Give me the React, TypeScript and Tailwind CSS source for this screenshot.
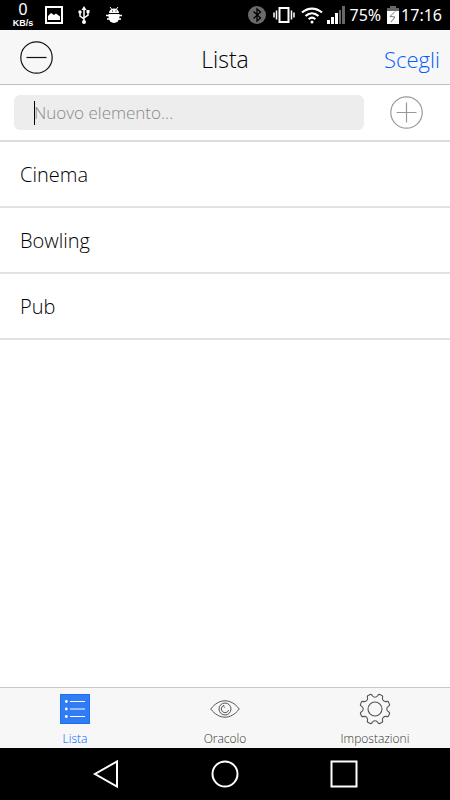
import React, { useState } from 'react';

type TabId = 'lista' | 'oracolo' | 'impostazioni';

interface Tab {
  id: TabId;
  label: string;
  icon: React.ReactNode;
}

// Outline of the settings gear: eight rounded teeth with hollow valleys
const gearPath = () => {
  const point = (deg: number, r: number) => {
    const rad = (deg * Math.PI) / 180;
    return `${(16 + r * Math.cos(rad)).toFixed(2)} ${(16 + r * Math.sin(rad)).toFixed(2)}`;
  };
  let d = `M${point(12.5, 14.2)}`;
  for (let i = 0; i < 8; i++) {
    const a = 22.5 + i * 45;
    d += ` Q${point(a - 8, 15.7)} ${point(a, 15.2)}`;
    d += ` Q${point(a + 8, 15.7)} ${point(a + 10, 14.2)}`;
    d += ` C${point(a + 13, 11.2)} ${point(a + 32, 11.2)} ${point(a + 35, 14.2)}`;
  }
  return `${d} Z`;
};

function ListIcon() {
  return (
    <svg width="30" height="30" viewBox="0 0 30 30" aria-hidden="true">
      <rect width="30" height="30" fill="#2f7cf6" />
      <rect x="0.5" y="0.5" width="29" height="29" fill="none" stroke="#1f6df0" />
      <g fill="#fff">
        <circle cx="6.3" cy="7.5" r="1.4" />
        <circle cx="6.3" cy="15" r="1.4" />
        <circle cx="6.3" cy="22.5" r="1.4" />
      </g>
      <path d="M10 7.5h15M10 15h15M10 22.5h15" stroke="#fff" strokeWidth="1.2" />
    </svg>
  );
}

function EyeIcon() {
  return (
    <svg width="30" height="30" viewBox="0 0 30 30" fill="none" stroke="#555" aria-hidden="true">
      <path d="M0.7 15C5 9.5 10 6.8 15 6.8S25 9.5 29.3 15C25 20.5 20 23.2 15 23.2S5 20.5 0.7 15Z" />
      <circle cx="15" cy="15" r="6" />
      <path d="M14 11.4A3.7 3.7 0 1 0 18.6 16" />
      <path d="M14 11.4c-.6 1 0 2 1.2 2" strokeWidth="0.8" />
    </svg>
  );
}

function GearIcon() {
  return (
    <svg width="32" height="32" viewBox="0 0 32 32" fill="none" stroke="#555" strokeWidth="1.1" aria-hidden="true">
      <path d={gearPath()} />
      <circle cx="16" cy="16" r="7" />
    </svg>
  );
}

const tabs: Tab[] = [
  { id: 'lista', label: 'Lista', icon: <ListIcon /> },
  { id: 'oracolo', label: 'Oracolo', icon: <EyeIcon /> },
  { id: 'impostazioni', label: 'Impostazioni', icon: <GearIcon /> },
];

function StatusBar() {
  return (
    <div className="flex h-[30px] items-center justify-between bg-black pr-2 pl-3 font-normal text-white">
      <div className="flex items-center">
        <div className="w-[22px] text-center font-['Liberation_Sans',sans-serif] font-bold">
          <div className="text-[16px] leading-4 font-normal">0</div>
          <div className="text-[9px] leading-[10px]">KB/s</div>
        </div>
        <svg className="ml-[11px]" width="18" height="18" viewBox="0 0 18 18" aria-hidden="true">
          <rect x="1" y="1" width="16" height="16" fill="none" stroke="#fff" strokeWidth="2" />
          <path d="M3 14V10l3-3 3 2 2-1.5 4 3V14Z" fill="#fff" />
        </svg>
        <svg className="ml-[15px]" width="12" height="18" viewBox="0 0 12 18" aria-hidden="true">
          <path d="M6 3v13M2 6v4l4 3M10 5v4l-4 3" fill="none" stroke="#fff" strokeWidth="1.5" />
          <path d="M6 0l2.5 4h-5Z" fill="#fff" />
          <circle cx="2" cy="6" r="1.7" fill="#fff" />
          <rect x="8.5" y="4" width="3" height="3" fill="#fff" />
          <circle cx="6" cy="16" r="2" fill="#fff" />
        </svg>
        <svg className="ml-4" width="16" height="18" viewBox="0 0 16 18" aria-hidden="true">
          <path d="M3 7a5 4.5 0 0 1 10 0Z" fill="#fff" />
          <path d="M4 1l2 2.5M12 1l-2 2.5" stroke="#fff" />
          <path d="M2.5 8h11v3a5.5 6 0 0 1-11 0Z" fill="#fff" />
          <path d="M0 9.5h16M1 13h14" stroke="#fff" strokeWidth="1.5" />
          <path d="M6 5h1M9.5 5h1" stroke="#000" />
        </svg>
      </div>

      <div className="flex items-center font-['Noto_Sans',sans-serif]">
        <svg width="18" height="18" viewBox="0 0 18 18" aria-hidden="true">
          <circle cx="9" cy="9" r="9" fill="#6b6b6b" />
          <path d="M5.5 5.5l7 6.5L9 15V3l3.5 3-7 6.5" fill="none" stroke="#000" strokeWidth="1.3" />
        </svg>
        <svg className="ml-[7px]" width="22" height="18" viewBox="0 0 22 18" fill="none" stroke="#fff" aria-hidden="true">
          <rect x="6.5" y="2" width="9" height="14" strokeWidth="2" />
          <path d="M3.5 4.5v9M18.5 4.5v9" strokeWidth="1.5" />
          <path d="M1 6.5v5M21 6.5v5" strokeWidth="1.5" />
        </svg>
        <svg className="ml-[6px]" width="22" height="18" viewBox="0 0 22 18" fill="none" stroke="#fff" strokeWidth="2.2" aria-hidden="true">
          <path d="M1 6.5c6-5.3 14-5.3 20 0M4.5 10c4-3.6 9-3.6 13 0M7.7 13.2c2-1.8 4.6-1.8 6.6 0" />
          <circle cx="11" cy="16" r="1.5" fill="#fff" stroke="none" />
        </svg>
        <svg className="ml-1" width="18" height="18" viewBox="0 0 18 18" aria-hidden="true">
          <path d="M0 14h3v4H0zM4 11h3v7H4zM8 7h3v11H8z" fill="#fff" />
          <path d="M12 4h2v14h-2zM15 0h3v18h-3z" fill="#666" />
        </svg>
        <span className="ml-1 text-[16px] leading-5">75%</span>
        <svg className="ml-[6px]" width="12" height="18" viewBox="0 0 12 18" aria-hidden="true">
          <path d="M3 0h6v2h3v3H0V2h3Z" fill="#666" />
          <path d="M0 5h12v13H0Z" fill="#fff" />
          <path d="M8 5.5L3 10.5l5 .5-4 5" fill="none" stroke="#777" />
        </svg>
        <span className="ml-[2px] text-[16px] leading-5">17:16</span>
      </div>
    </div>
  );
}

function SystemNav() {
  return (
    <div className="flex h-[52px] items-center justify-around bg-black px-[46px]">
      <button type="button" aria-label="Indietro">
        <svg width="28" height="30" viewBox="0 0 28 30" fill="none" stroke="#fff" strokeWidth="2" aria-hidden="true">
          <path d="M25 2.5v25L3 15Z" />
        </svg>
      </button>
      <button type="button" aria-label="Home">
        <svg width="28" height="28" viewBox="0 0 28 28" fill="none" stroke="#fff" strokeWidth="2" aria-hidden="true">
          <circle cx="14" cy="14" r="12.5" />
        </svg>
      </button>
      <button type="button" aria-label="Recenti">
        <svg width="28" height="28" viewBox="0 0 28 28" fill="none" stroke="#fff" strokeWidth="2" aria-hidden="true">
          <rect x="1.5" y="1.5" width="25" height="25" />
        </svg>
      </button>
    </div>
  );
}

export default function App() {
  const [items, setItems] = useState<string[]>(['Cinema', 'Bowling', 'Pub']);
  const [text, setText] = useState<string>('');
  const [activeTab, setActiveTab] = useState<TabId>('lista');

  const addItem = (e: React.FormEvent) => {
    e.preventDefault();
    if (text.trim() === '') return;
    setItems((prev) => [...prev, text.trim()]);
    setText('');
  };

  return (
    <div className="flex min-h-screen flex-col bg-white font-['Open_Sans','Noto_Sans',sans-serif] font-light text-black">
      <StatusBar />

      <header className="grid h-[55px] grid-cols-3 items-center border-b border-[#c0c0c0] bg-[#f7f7f7]">
        <button
          type="button"
          aria-label="Rimuovi"
          className="ml-5 justify-self-start"
          onClick={() => setItems((prev) => prev.slice(0, -1))}
        >
          <svg width="33" height="33" viewBox="0 0 33 33" fill="none" stroke="#111" strokeWidth="1.2" aria-hidden="true">
            <circle cx="16.5" cy="16.5" r="15.7" />
            <path d="M6.5 16.5h20" />
          </svg>
        </button>
        <h1 className="pt-1 text-center text-[23px] leading-7">Lista</h1>
        <button type="button" className="mr-[10px] justify-self-end pt-1 text-[22px] leading-7 text-[#0060ff]">
          Scegli
        </button>
      </header>

      <form onSubmit={addItem} className="flex h-[57px] items-center border-b-2 border-[#dcdcdc] pr-[27px] pl-[14px]">
        <div className="relative flex-1">
          <input
            type="text"
            aria-label="Nuovo elemento"
            placeholder="Nuovo elemento..."
            value={text}
            onChange={(e) => setText(e.target.value)}
            className="h-[35px] w-full rounded-md bg-[#ededed] px-5 text-[17px] placeholder:text-[#888] focus:outline-none"
          />
          {/* Text cursor */}
          {text === '' && <span className="pointer-events-none absolute top-[6px] left-5 h-6 w-px bg-black" />}
        </div>
        <button type="submit" aria-label="Aggiungi" className="ml-[26px]">
          <svg width="33" height="33" viewBox="0 0 33 33" fill="none" stroke="#999" strokeWidth="1.2" aria-hidden="true">
            <circle cx="16.5" cy="16.5" r="15.7" />
            <path d="M6.5 16.5h20M16.5 6.5v20" />
          </svg>
        </button>
      </form>

      <ul className="flex-1">
        {items.map((item, i) => (
          <li key={i} className="border-b-2 border-[#e2e2e2] px-5 pt-[19px] pb-[17px] text-[20px] leading-7">
            {item}
          </li>
        ))}
      </ul>

      <nav className="grid h-[61px] grid-cols-3 border-t border-[#c8c8c8] bg-[#f7f7f7]">
        {tabs.map((tab) => (
          <button
            key={tab.id}
            type="button"
            onClick={() => setActiveTab(tab.id)}
            className={`flex flex-col items-center pt-[5px] text-[12px] leading-4 ${
              tab.id === activeTab ? 'text-[#0060ff]' : 'text-[#333]'
            }`}
          >
            <span className="flex h-8 items-center">{tab.icon}</span>
            <span className="mt-[6px]">{tab.label}</span>
          </button>
        ))}
      </nav>

      <SystemNav />
    </div>
  );
}
